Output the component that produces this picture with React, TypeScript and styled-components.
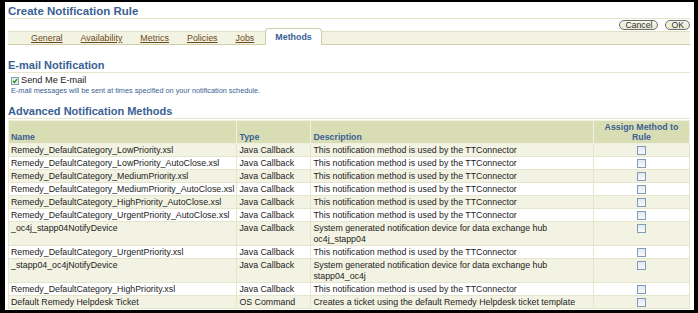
import React from 'react';
import styled, { createGlobalStyle } from 'styled-components';

const GlobalStyle = createGlobalStyle`
  html, body {
    margin: 0;
    padding: 0;
    background: #000;
  }
  body {
    font-family: "Liberation Sans", Arial, sans-serif;
  }
`;

const Frame = styled.div`
  margin: 2px 4px 0 5px;
  height: 308px;
  background: #fff;
  overflow: hidden;
  padding: 0 4px 0 3px;
`;

const PageTitle = styled.h1`
  margin: 0;
  padding: 2px 0 0 0;
  font-size: 11.5px;
  line-height: 14px;
  font-weight: bold;
  color: #3a6194;
  border-bottom: 1px solid #e6e6c8;
`;

const ButtonBar = styled.div`
  display: flex;
  justify-content: flex-end;
  gap: 7px;
  padding: 1px 0 0;
  height: 10px;
`;

const PillButton = styled.button`
  font-family: "Liberation Sans", Arial, sans-serif;
  font-size: 8.7px;
  color: #333;
  background: linear-gradient(#f7f7ea, #e8e8d2);
  border: 1px solid #6e6e6e;
  border-radius: 6px;
  padding: 0 5px;
  height: 10px;
  line-height: 8px;
`;

const TabStrip = styled.div`
  display: flex;
  align-items: flex-end;
  height: 12px;
  margin-top: 1px;
  background: #f3f3e3;
  border-top: 1px solid #e0e0c4;
  border-bottom: 1px solid #cfcfa8;
  padding-left: 23px;
`;

const Tab = styled.a<{ $active?: boolean }>`
  font-size: 8.9px;
  line-height: 12px;
  padding: 0 ${(p) => (p.$active ? '9px' : '0')};
  margin-right: ${(p) => (p.$active ? '0' : '18px')};
  color: ${(p) => (p.$active ? '#3a6194' : '#6b4a1c')};
  font-weight: ${(p) => (p.$active ? 'bold' : 'normal')};
  text-decoration: ${(p) => (p.$active ? 'none' : 'underline')};
  ${(p) =>
    p.$active &&
    `
    background: #fff;
    height: 16px;
    margin-bottom: -1px;
    margin-left: -7px;
    border: 1px solid #cfcfa8;
    border-bottom: none;
    border-radius: 4px 4px 0 0;
    line-height: 17px;
  `}
`;

const SectionTitle = styled.h2<{ $gap: number }>`
  margin: ${(p) => p.$gap}px 0 0;
  font-size: 11px;
  line-height: 13px;
  font-weight: bold;
  color: #3a6194;
  border-bottom: 1px solid #e6e6c8;
`;

const CheckRow = styled.label`
  display: flex;
  align-items: center;
  gap: 2px;
  font-size: 9.2px;
  line-height: 11px;
  color: #222;
  padding: 2px 0 0 3px;
`;

const Box = styled.span<{ $checked?: boolean }>`
  display: inline-block;
  box-sizing: border-box;
  width: 8px;
  height: 8px;
  border: 1px solid #7f9db9;
  background: ${(p) => (p.$checked ? '#e6f0d8' : '#f4f6f8')};
  position: relative;
`;

const Tick = styled.svg`
  position: absolute;
  left: 0;
  top: 0;
`;

const Hint = styled.div`
  font-size: 7.3px;
  line-height: 9px;
  color: #3a6194;
  padding: 0 0 0 3px;
`;

const Table = styled.table`
  width: 100%;
  border-collapse: collapse;
  margin-top: 1px;
  font-size: 8.8px;
  color: #222;
`;

const Th = styled.th<{ $w?: number; $center?: boolean }>`
  background: #d9ddb4;
  color: #3a6194;
  font-weight: bold;
  text-align: ${(p) => (p.$center ? 'center' : 'left')};
  vertical-align: bottom;
  border: 1px solid #f0f0e0;
  padding: 1px 2px;
  line-height: 10px;
  ${(p) => (p.$w ? `width: ${p.$w}px;` : '')}
`;

const Tr = styled.tr<{ $alt?: boolean }>`
  background: ${(p) => (p.$alt ? '#f3f3e3' : '#fff')};
`;

const Td = styled.td<{ $center?: boolean }>`
  border: 1px solid #e6e6cc;
  padding: 1px 2px 0;
  line-height: 11px;
  vertical-align: top;
  white-space: nowrap;
  text-align: ${(p) => (p.$center ? 'center' : 'left')};
`;

const WrapTd = styled(Td)`
  white-space: normal;
`;

const CellBox = styled(Box)`
  display: block;
  width: 9px;
  height: 9px;
  margin: 1px auto 0;
  background: linear-gradient(#e4e9ee, #f8f9fb);
`;

type Method = { name: string; type: string; desc: string };

const TT = 'This notification method is used by the TTConnector';

const methods: Method[] = [
  { name: 'Remedy_DefaultCategory_LowPriority.xsl', type: 'Java Callback', desc: TT },
  { name: 'Remedy_DefaultCategory_LowPriority_AutoClose.xsl', type: 'Java Callback', desc: TT },
  { name: 'Remedy_DefaultCategory_MediumPriority.xsl', type: 'Java Callback', desc: TT },
  { name: 'Remedy_DefaultCategory_MediumPriority_AutoClose.xsl', type: 'Java Callback', desc: TT },
  { name: 'Remedy_DefaultCategory_HighPriority_AutoClose.xsl', type: 'Java Callback', desc: TT },
  { name: 'Remedy_DefaultCategory_UrgentPriority_AutoClose.xsl', type: 'Java Callback', desc: TT },
  {
    name: '_oc4j_stapp04NotifyDevice',
    type: 'Java Callback',
    desc: 'System generated notification device for data exchange hub oc4j_stapp04',
  },
  { name: 'Remedy_DefaultCategory_UrgentPriority.xsl', type: 'Java Callback', desc: TT },
  {
    name: '_stapp04_oc4jNotifyDevice',
    type: 'Java Callback',
    desc: 'System generated notification device for data exchange hub stapp04_oc4j',
  },
  { name: 'Remedy_DefaultCategory_HighPriority.xsl', type: 'Java Callback', desc: TT },
  {
    name: 'Default Remedy Helpdesk Ticket',
    type: 'OS Command',
    desc: 'Creates a ticket using the default Remedy Helpdesk ticket template',
  },
];

const tabs = ['General', 'Availability', 'Metrics', 'Policies', 'Jobs'];

export default function App() {
  return (
    <>
      <GlobalStyle />
      <Frame>
        <PageTitle>Create Notification Rule</PageTitle>
        <ButtonBar>
          <PillButton>Cancel</PillButton>
          <PillButton>OK</PillButton>
        </ButtonBar>
        <TabStrip>
          {tabs.map((t) => (
            <Tab key={t}>{t}</Tab>
          ))}
          <Tab $active>Methods</Tab>
        </TabStrip>

        <SectionTitle $gap={14}>E-mail Notification</SectionTitle>
        <CheckRow>
          <Box $checked>
            <Tick width="6" height="6" viewBox="0 0 6 6">
              <path d="M1 3 L2.5 4.5 L5 1.2" stroke="#1f8a2a" strokeWidth="1.3" fill="none" />
            </Tick>
          </Box>
          Send Me E-mail
        </CheckRow>
        <Hint>E-mail messages will be sent at times specified on your notification schedule.</Hint>

        <SectionTitle $gap={10}>Advanced Notification Methods</SectionTitle>
        <Table>
          <thead>
            <tr>
              <Th $w={222}>Name</Th>
              <Th $w={69}>Type</Th>
              <Th>Description</Th>
              <Th $w={91} $center>
                Assign Method to Rule
              </Th>
            </tr>
          </thead>
          <tbody>
            {methods.map((m, i) => (
              <Tr key={m.name} $alt={i % 2 === 0}>
                <Td>{m.name}</Td>
                <Td>{m.type}</Td>
                <WrapTd>{m.desc}</WrapTd>
                <Td $center>
                  <CellBox />
                </Td>
              </Tr>
            ))}
          </tbody>
        </Table>
      </Frame>
    </>
  );
}
